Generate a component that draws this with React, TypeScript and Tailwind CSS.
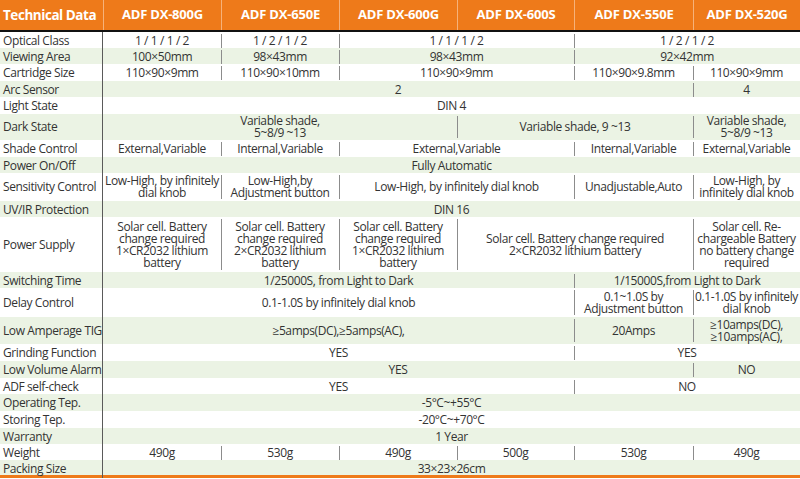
import React from "react";

type Cell = [number, string];
type Row = { label: string; h: number; cells: Cell[] };

const spanClass: Record<number, string> = {
  1: "col-span-1",
  2: "col-span-2",
  3: "col-span-3",
  4: "col-span-4",
  5: "col-span-5",
  6: "col-span-6",
};

const rows: Row[] = [
  { label: "Optical Class", h: 16, cells: [[1, "1 / 1 / 1 / 2"], [1, "1 / 2 / 1 / 2"], [2, "1 / 1 / 1 / 2"], [2, "1 / 2 / 1 / 2"]] },
  { label: "Viewing Area", h: 16, cells: [[1, "100×50mm"], [1, "98×43mm"], [2, "98×43mm"], [2, "92×42mm"]] },
  { label: "Cartridge Size", h: 17, cells: [[1, "110×90×9mm"], [1, "110×90×10mm"], [2, "110×90×9mm"], [1, "110×90×9.8mm"], [1, "110×90×9mm"]] },
  { label: "Arc Sensor", h: 16, cells: [[5, "2"], [1, "4"]] },
  { label: "Light State", h: 17, cells: [[6, "DIN 4"]] },
  { label: "Dark State", h: 26, cells: [[3, "Variable shade,\n5~8/9 ~13"], [2, "Variable shade, 9 ~13"], [1, "Variable shade,\n5~8/9 ~13"]] },
  { label: "Shade Control", h: 17, cells: [[1, "External,Variable"], [1, "Internal,Variable"], [2, "External,Variable"], [1, "Internal,Variable"], [1, "External,Variable"]] },
  { label: "Power On/Off", h: 16, cells: [[6, "Fully Automatic"]] },
  { label: "Sensitivity Control", h: 28, cells: [[1, "Low-High, by infinitely\ndial knob"], [1, "Low-High,by\nAdjustment button"], [2, "Low-High, by infinitely dial knob"], [1, "Unadjustable,Auto"], [1, "Low-High, by\ninfinitely dial knob"]] },
  { label: "UV/IR Protection", h: 16, cells: [[6, "DIN 16"]] },
  { label: "Power Supply", h: 55, cells: [[1, "Solar cell. Battery\nchange required\n1×CR2032 lithium\nbattery"], [1, "Solar cell. Battery\nchange required\n2×CR2032 lithium\nbattery"], [1, "Solar cell. Battery\nchange required\n1×CR2032 lithium\nbattery"], [2, "Solar cell. Battery change required\n2×CR2032 lithium battery"], [1, "Solar cell. Re-\nchargeable Battery\nno battery change\nrequired"]] },
  { label: "Switching Time", h: 16, cells: [[4, "1/25000S, from Light to Dark"], [2, "1/15000S,from Light to Dark"]] },
  { label: "Delay Control", h: 29, cells: [[4, "0.1-1.0S by infinitely dial knob"], [1, "0.1~1.0S by\nAdjustment button"], [1, "0.1-1.0S by infinitely\ndial knob"]] },
  { label: "Low Amperage TIG", h: 27, cells: [[4, "≥5amps(DC),≥5amps(AC),"], [1, "20Amps"], [1, "≥10amps(DC),\n≥10amps(AC),"]] },
  { label: "Grinding Function", h: 17, cells: [[4, "YES"], [2, "YES"]] },
  { label: "Low Volume Alarm", h: 17, cells: [[5, "YES"], [1, "NO"]] },
  { label: "ADF self-check", h: 16, cells: [[4, "YES"], [2, "NO"]] },
  { label: "Operating Tep.", h: 17, cells: [[6, "-5°C~+55°C"]] },
  { label: "Storing Tep.", h: 17, cells: [[6, "-20°C~+70°C"]] },
  { label: "Warranty", h: 16, cells: [[6, "1 Year"]] },
  { label: "Weight", h: 16, cells: [[1, "490g"], [1, "530g"], [1, "490g"], [1, "500g"], [1, "530g"], [1, "490g"]] },
  { label: "Packing Size", h: 15, cells: [[6, "33×23×26cm"]] },
];

const headers = ["ADF DX-800G", "ADF DX-650E", "ADF DX-600G", "ADF DX-600S", "ADF DX-550E", "ADF DX-520G"];

const gridCols = "grid grid-cols-[103px_118px_118px_118px_117px_119px_107px]";

export default function App() {
  return (
    <div
      className="w-[800px] h-[479px] bg-white overflow-hidden text-[#333333]"
      style={{ fontFamily: '"Open Sans", "Noto Sans", sans-serif' }}
    >
      <div className={`${gridCols} h-[30px] bg-[#ee7a1a] text-white font-bold`}>
        <div className="flex items-center pl-[3px] text-[13.5px] tracking-[-0.45px]">Technical Data</div>
        {headers.map((h) => (
          <div key={h} className="flex items-center justify-center border-l border-[#f6b27a] text-[13px] tracking-[-0.2px]">
            {h}
          </div>
        ))}
      </div>
      <div className="h-[2px] bg-[#111]" />
      {rows.map((r, i) => (
        <div
          key={r.label}
          className={`${gridCols} ${i % 2 === 0 ? "bg-white" : "bg-[#ebf3e4]"}`}
          style={{ height: r.h }}
        >
          <div className="flex items-center pl-[3px] border-r border-[#5a5a5a] text-[12px] tracking-[-0.4px] whitespace-nowrap">
            {r.label}
          </div>
          {r.cells.map(([span, text], j) => (
            <div
              key={j}
              className={`${spanClass[span]} relative flex items-center justify-center text-center whitespace-pre-line leading-[12px] text-[12px] tracking-[-0.4px] ${
                j > 0
                  ? "before:absolute before:left-0 before:top-[2px] before:bottom-[2px] before:w-px before:bg-[#8c8c8c] before:content-['']"
                  : ""
              }`}
            >
              {text}
            </div>
          ))}
        </div>
      ))}
      <div className="h-[3px] bg-[#ee7a1a]" />
    </div>
  );
}
